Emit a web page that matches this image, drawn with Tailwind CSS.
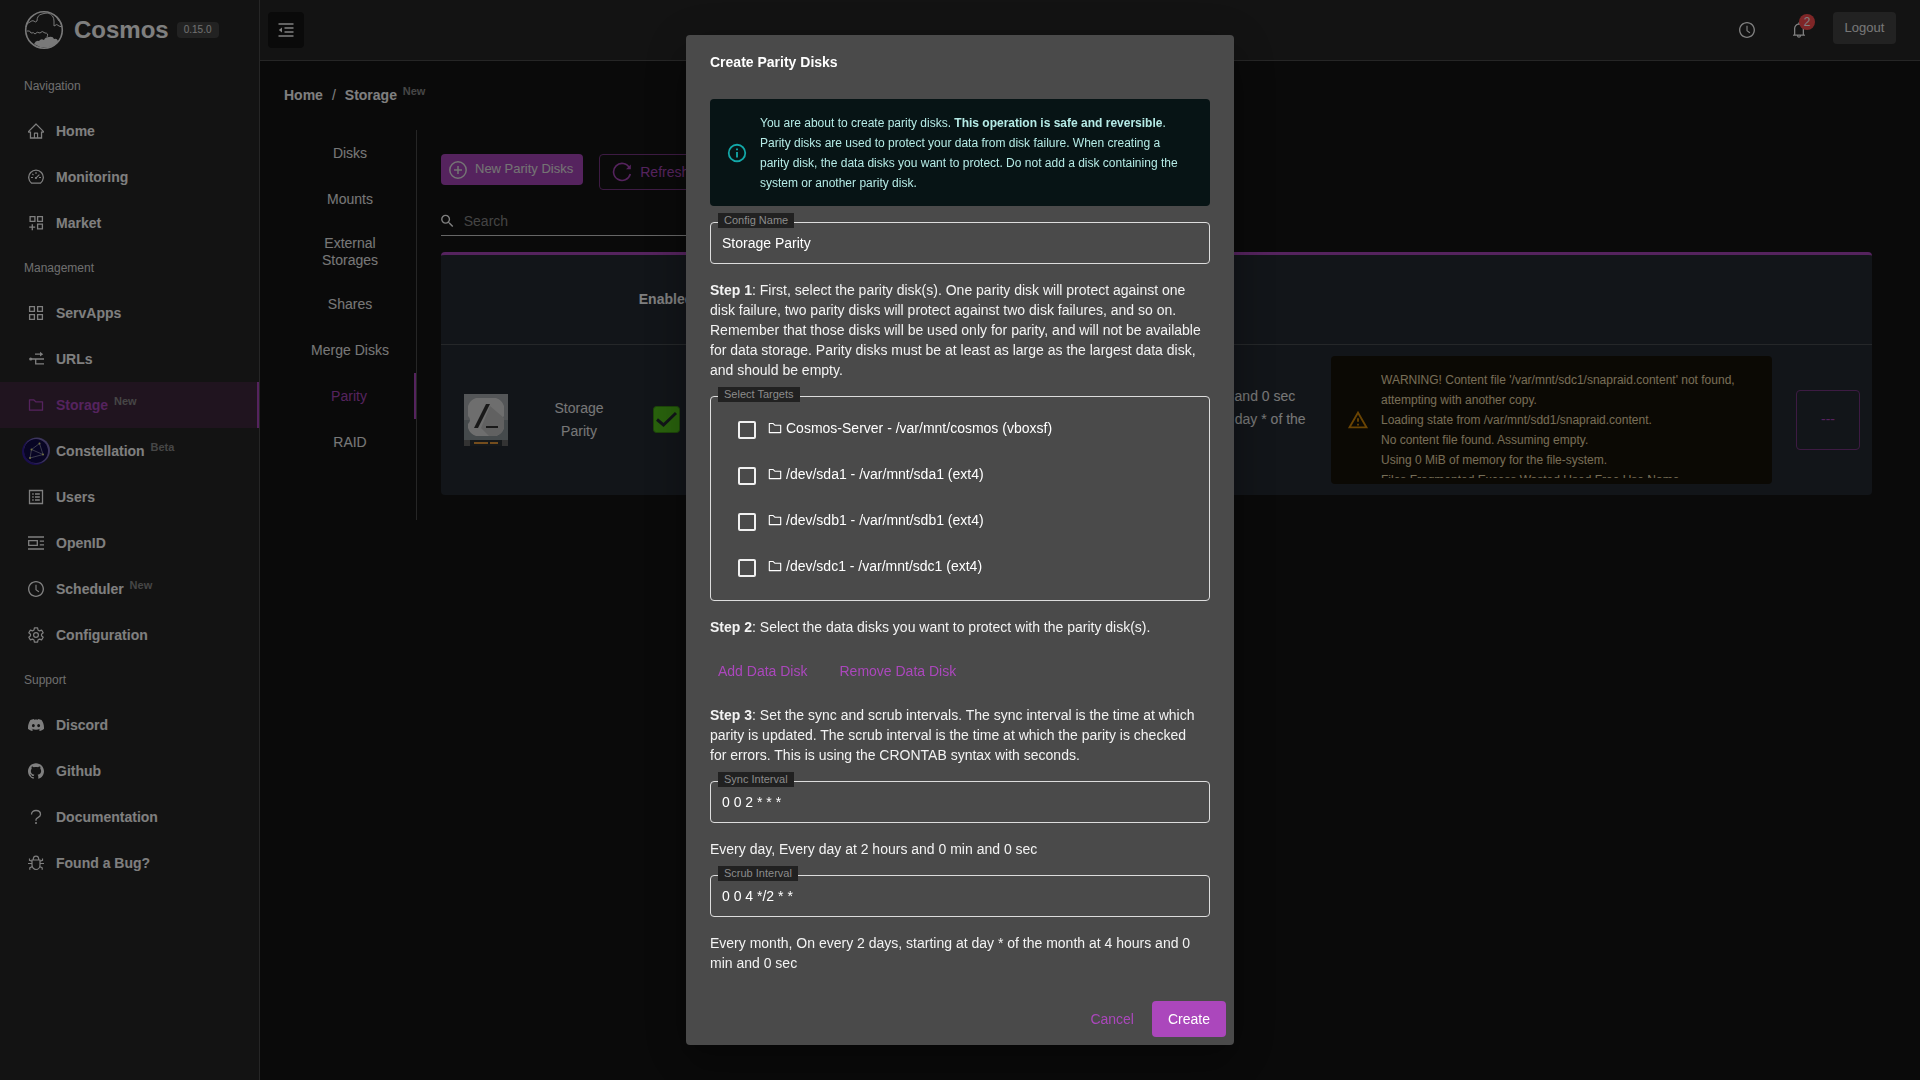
<!DOCTYPE html>
<html lang="en">
<head>
<meta charset="utf-8">
<meta name="viewport" content="width=device-width, initial-scale=1">
<title>Cosmos - Storage</title>
<script src="https://cdn.jsdelivr.net/npm/@tailwindcss/browser@4"></script>
</head>
<body class="bg-[#141414] font-['Liberation_Sans',Arial,sans-serif] text-sm text-white">

<svg class="hidden" aria-hidden="true">
  <symbol id="i-home" viewBox="64 64 896 896"><path d="M946.5 505L560.1 118.8l-25.9-25.9a31.5 31.5 0 00-44.4 0L77.5 505a63.9 63.9 0 00-18.8 46c.4 35.2 29.7 63.3 64.9 63.3h42.5V940h691.8V614.3h43.4c17.1 0 33.2-6.7 45.3-18.8a63.6 63.6 0 0018.7-45.3c0-17-6.7-33.1-18.8-45.2zM568 868H456V664h112v204zm217.9-325.7V868H632V640c0-22.1-17.9-40-40-40H432c-22.1 0-40 17.9-40 40v228H238.1V542.3h-96l370-369.7 23.1 23.1L882 542.3h-96.1z"/></symbol>
  <symbol id="i-clock" viewBox="64 64 896 896"><path d="M512 64C264.6 64 64 264.6 64 512s200.6 448 448 448 448-200.6 448-448S759.4 64 512 64zm0 820c-205.4 0-372-166.6-372-372s166.6-372 372-372 372 166.6 372 372-166.6 372-372 372z"/><path d="M686.7 638.6L544.1 535.5V288c0-4.4-3.6-8-8-8H488c-4.4 0-8 3.6-8 8v275.4c0 2.6 1.2 5 3.3 6.5l165.4 120.6c3.6 2.6 8.6 1.8 11.2-1.7l28.6-39c2.6-3.7 1.8-8.7-1.8-11.2z"/></symbol>
  <symbol id="i-folder" viewBox="64 64 896 896"><path d="M880 298.4H521L403.7 186.2a8.15 8.15 0 00-5.5-2.2H144c-17.7 0-32 14.3-32 32v592c0 17.7 14.3 32 32 32h736c17.7 0 32-14.3 32-32V330.4c0-17.7-14.3-32-32-32zM840 768H184V256h188.5l119.6 114.4H840V768z"/></symbol>
  <symbol id="i-bell" viewBox="64 64 896 896"><path d="M816 768h-24V428c0-141.1-104.3-257.7-240-277.1V112c0-22.1-17.9-40-40-40s-40 17.9-40 40v38.9c-135.7 19.4-240 136-240 277.1v340h-24c-17.7 0-32 14.3-32 32v32c0 4.4 3.6 8 8 8h216c0 61.8 50.2 112 112 112s112-50.2 112-112h216c4.4 0 8-3.6 8-8v-32c0-17.7-14.3-32-32-32zM512 888c-26.5 0-48-21.5-48-48h96c0 26.5-21.5 48-48 48zM304 768V428c0-55.6 21.6-107.8 60.9-147.1S456.4 220 512 220c55.6 0 107.8 21.6 147.1 60.9S720 372.4 720 428v340H304z"/></symbol>
  <symbol id="i-github" viewBox="64 64 896 896"><path d="M511.6 76.3C264.3 76.2 64 276.4 64 523.5 64 718.9 189.3 885 363.8 946c23.5 5.9 19.9-10.8 19.9-22.2v-77.5c-135.7 15.9-141.2-73.9-150.3-88.9C215 726 171.5 718 184.5 703c30.9-15.9 62.4 4 98.9 57.9 26.4 39.1 77.9 32.5 104 26 5.7-23.5 17.9-44.5 34.7-60.8-140.6-25.2-199.2-111-199.2-213 0-49.5 16.3-95 48.3-131.7-20.4-60.5 1.9-112.3 4.9-120 58.1-5.2 118.5 41.6 123.2 45.3 33-8.9 70.7-13.6 112.9-13.6 42.4 0 80.2 4.9 113.5 13.9 11.3-8.6 67.3-48.8 121.3-43.9 2.9 7.7 24.7 58.3 5.5 118 32.4 36.8 48.9 82.7 48.9 132.3 0 102.2-59 188.1-200 212.9a127.5 127.5 0 0138.1 91v112.5c.8 9 0 17.9 15 17.9 177.1-59.7 304.6-227 304.6-424.1 0-247.2-200.4-447.3-447.5-447.3z"/></symbol>
  <symbol id="i-discord" viewBox="0 0 24 24"><path d="M20.317 4.3698a19.7913 19.7913 0 00-4.8851-1.5152.0741.0741 0 00-.0785.0371c-.211.3753-.4447.8648-.6083 1.2495-1.8447-.2762-3.68-.2762-5.4868 0-.1636-.3933-.4058-.8742-.6177-1.2495a.077.077 0 00-.0785-.037 19.7363 19.7363 0 00-4.8852 1.515.0699.0699 0 00-.0321.0277C.5334 9.0458-.319 13.5799.0992 18.0578a.0824.0824 0 00.0312.0561c2.0528 1.5076 4.0413 2.4228 5.9929 3.0294a.0777.0777 0 00.0842-.0276c.4616-.6304.8731-1.2952 1.226-1.9942a.076.076 0 00-.0416-.1057c-.6528-.2476-1.2743-.5495-1.8722-.8923a.077.077 0 01-.0076-.1277c.1258-.0943.2517-.1923.3718-.2914a.0743.0743 0 01.0776-.0105c3.9278 1.7933 8.18 1.7933 12.0614 0a.0739.0739 0 01.0785.0095c.1202.099.246.1981.3728.2924a.077.077 0 01-.0066.1276 12.2986 12.2986 0 01-1.873.8914.0766.0766 0 00-.0407.1067c.3604.698.7719 1.3628 1.225 1.9932a.076.076 0 00.0842.0286c1.961-.6067 3.9495-1.5219 6.0023-3.0294a.077.077 0 00.0313-.0552c.5004-5.177-.8382-9.6739-3.5485-13.6604a.061.061 0 00-.0312-.0286zM8.02 15.3312c-1.1825 0-2.1569-1.0857-2.1569-2.419 0-1.3332.9555-2.4189 2.157-2.4189 1.2108 0 2.1757 1.0952 2.1568 2.419 0 1.3332-.9555 2.4189-2.1569 2.4189zm7.9748 0c-1.1825 0-2.1569-1.0857-2.1569-2.419 0-1.3332.9554-2.4189 2.1569-2.4189 1.2108 0 2.1757 1.0952 2.1568 2.419 0 1.3332-.946 2.4189-2.1568 2.4189Z"/></symbol>
  <symbol id="i-dash" viewBox="0 0 16 16"><path fill="none" stroke="currentColor" stroke-width="1.3" stroke-linejoin="round" d="M3.6 14.2A7.3 7.3 0 1 1 12.400 14.200Z"/><path fill="none" stroke="currentColor" stroke-width="1.1" d="M8 3v2M3 8.500h2M11 8.500h2M4.300 4.900l1.200 1.200M7.800 9.200l3.600-3.600"/><circle cx="7.900" cy="9" r="1.100"/></symbol>
  <symbol id="i-appadd" viewBox="0 0 16 16"><path fill="none" stroke="currentColor" stroke-width="1.300" d="M2.100 1.600h4.800v4.800H2.100ZM9.600 1.600h4.800v4.800H9.600ZM9.600 9.100h4.800v4.800H9.600ZM4.300 9.200v6M1.200 12.200h6"/></symbol>
  <symbol id="i-app" viewBox="0 0 16 16"><path fill="none" stroke="currentColor" stroke-width="1.300" d="M1.600 1.600h4.800v4.800H1.600ZM9.600 1.600h4.800v4.800H9.600ZM9.600 9.600h4.800v4.800H9.600ZM1.600 9.600h4.800v4.800H1.600Z"/></symbol>
  <symbol id="i-node" viewBox="0 0 16 16"><circle cx="2.700" cy="8" r="1.600"/><path fill="none" stroke="currentColor" stroke-width="1.300" d="M2.700 8H16M7 3.200h6M7.700 8v4.900H16"/><path d="M12 .8L15.200 3.200L12 5.600Z"/></symbol>
  <symbol id="i-profile" viewBox="0 0 16 16"><path fill="none" stroke="currentColor" stroke-width="1.300" d="M1.500 1.500h13v13h-13ZM7 5h4.800M7 8h4.800M7 11h4.800"/><path d="M4.200 4.200h1.500v1.500H4.200ZM4.200 7.200h1.500v1.500H4.200ZM4.200 10.200h1.500v1.500H4.200Z"/></symbol>
  <symbol id="i-openid" viewBox="0 0 16 16"><path fill="none" stroke="currentColor" stroke-width="1.300" d="M0 2h16M0 14h16M.7 5.700h8.600v4.600H.7ZM11.800 6.200H16M11.800 9.800H16"/></symbol>
  <symbol id="i-gear" viewBox="0 0 16 16"><path fill="none" stroke="currentColor" stroke-width="1.200" stroke-linejoin="round" d="M6.400.8h3.200l.4 2.200 1.500.9 2.100-.8 1.600 2.700-1.700 1.400v1.600l1.700 1.400-1.600 2.700-2.100-.8-1.500.9-.4 2.200H6.400L6 13l-1.500-.9-2.100.8L.8 10.200l1.700-1.400V7.200L.8 5.800l1.600-2.700 2.100.8L6 3Z"/><circle cx="8" cy="8" r="2.400" fill="none" stroke="currentColor" stroke-width="1.200"/></symbol>
  <symbol id="i-question" viewBox="0 0 16 16"><path fill="none" stroke="currentColor" stroke-width="1.300" d="M3.500 5.500C3.500 2.700 5.500 1.500 8 1.500s4.500 1.400 4.500 4C12.500 8.500 8 8.500 8 10.500v1.200"/><circle cx="8" cy="14" r="1"/></symbol>
  <symbol id="i-bug" viewBox="0 0 16 16"><path fill="none" stroke="currentColor" stroke-width="1.200" d="M4 5h8v5a4 4.500 0 0 1-8 0ZM5.200 5a2.800 3.800 0 0 1 5.600 0M0 8.500h4M12 8.500h4M1.500 3.500v1.800L4 6.300M14.500 3.500v1.800L12 6.300M1.800 14.800v-2l2.400-1.200M14.200 14.800v-2l-2.400-1.200"/></symbol>
  <symbol id="i-const" viewBox="0 0 28 28"><circle cx="13.500" cy="14.500" r="13.500" fill="#341c9c"/><circle cx="15" cy="13.500" r="13" fill="#7a6cb8"/><circle cx="14" cy="14" r="12" fill="#100a48"/><path d="M9.500 12.500 17.500 6.500 21 17.500 8 21ZM9.500 12.500 21 17.500" fill="none" stroke="#77779a"/><g fill="#e4e480"><circle cx="9.500" cy="12.500" r="1"/><circle cx="17.500" cy="6.500" r="1"/><circle cx="21" cy="17.500" r="1"/><circle cx="8" cy="21" r="1"/></g></symbol>
</svg>

<div class="flex min-h-screen">
  <aside class="w-[260px] shrink-0 border-r border-[#4d4d4d] bg-[#262626]">
    <a href="#" class="flex h-16 items-center pb-1 pl-6">
      <svg class="size-10" viewBox="0 0 40 40" fill="none" stroke="#f2f2f2" aria-hidden="true"><circle cx="20" cy="20" r="18.300" stroke-width="1.600"/><path d="M10 34q2-4 5-3 2-3 5-1 1-3 5-3 4-1 5 2 3-1 4 2-1 3-6 5-9 4-18-2Z" fill="#f2f2f2" stroke="none"/><path d="M2 17q0-4 4-5 2-2 4-1 1 2 3 0 0-6 5-7 3-1 6-1 6 2 6 8v5q3-3 5 0l3 1M29 4q4 3 6 7M3 21q3-1 4 2 3-1 4 1 2-3 5-1 2-3 5 0 4 0 2 4"/></svg>
      <span class="ml-2.5 text-2xl font-bold">Cosmos</span>
      <span class="ml-2 flex h-4 items-center rounded bg-[#444] px-[7px] text-[10px] leading-4 text-[#e0e0e0]">0.15.0</span>
    </a>
    <nav>
      <h2 class="flex h-11 items-center pl-6 text-xs text-[#ddd]">Navigation</h2>
      <ul class="font-bold">
        <li><a href="#" class="flex h-[46px] items-center gap-3 pl-7"><svg class="size-4 fill-current"><use href="#i-home"/></svg>Home</a></li>
        <li><a href="#" class="flex h-[46px] items-center gap-3 pl-7"><svg class="size-4 fill-current"><use href="#i-dash"/></svg>Monitoring</a></li>
        <li><a href="#" class="flex h-[46px] items-center gap-3 pl-7"><svg class="size-4 fill-current"><use href="#i-appadd"/></svg>Market</a></li>
      </ul>
      <h2 class="flex h-11 items-center pl-6 text-xs text-[#ddd]">Management</h2>
      <ul class="font-bold">
        <li><a href="#" class="flex h-[46px] items-center gap-3 pl-7"><svg class="size-4 fill-current"><use href="#i-app"/></svg>ServApps</a></li>
        <li><a href="#" class="flex h-[46px] items-center gap-3 pl-7"><svg class="size-4 fill-current"><use href="#i-node"/></svg>URLs</a></li>
        <li><a href="#" class="flex h-[46px] items-center gap-3 border-r-2 border-[#ab47bc] bg-[#41293f] pl-7 text-[#ab47bc]"><svg class="size-4 fill-current"><use href="#i-folder"/></svg><span>Storage <sup class="ml-0.5 text-[11px] text-[#8c8c8c]">New</sup></span></a></li>
        <li><a href="#" class="flex h-[46px] items-center gap-3 pl-7"><span class="flex w-4 justify-center"><svg class="size-7 shrink-0"><use href="#i-const"/></svg></span><span>Constellation <sup class="ml-0.5 text-[11px] text-[#8c8c8c]">Beta</sup></span></a></li>
        <li><a href="#" class="flex h-[46px] items-center gap-3 pl-7"><svg class="size-4 fill-current"><use href="#i-profile"/></svg>Users</a></li>
        <li><a href="#" class="flex h-[46px] items-center gap-3 pl-7"><svg class="size-4 fill-current"><use href="#i-openid"/></svg>OpenID</a></li>
        <li><a href="#" class="flex h-[46px] items-center gap-3 pl-7"><svg class="size-4 fill-current"><use href="#i-clock"/></svg><span>Scheduler <sup class="ml-0.5 text-[11px] text-[#8c8c8c]">New</sup></span></a></li>
        <li><a href="#" class="flex h-[46px] items-center gap-3 pl-7"><svg class="size-4 fill-current"><use href="#i-gear"/></svg>Configuration</a></li>
      </ul>
      <h2 class="flex h-11 items-center pl-6 text-xs text-[#ddd]">Support</h2>
      <ul class="font-bold">
        <li><a href="#" class="flex h-[46px] items-center gap-3 pl-7"><svg class="size-4 fill-current"><use href="#i-discord"/></svg>Discord</a></li>
        <li><a href="#" class="flex h-[46px] items-center gap-3 pl-7"><svg class="size-4 fill-current"><use href="#i-github"/></svg>Github</a></li>
        <li><a href="#" class="flex h-[46px] items-center gap-3 pl-7"><svg class="size-4 fill-current"><use href="#i-question"/></svg>Documentation</a></li>
        <li><a href="#" class="flex h-[46px] items-center gap-3 pl-7"><svg class="size-4 fill-current"><use href="#i-bug"/></svg>Found a Bug?</a></li>
      </ul>
    </nav>
  </aside>

  <div class="min-w-0 flex-1">
    <header class="flex h-[61px] items-center border-b border-[#4d4d4d] bg-[#262626] pr-6 pl-2">
      <button type="button" aria-label="Toggle menu" class="flex size-9 items-center justify-center rounded bg-[#141414]">
        <svg class="size-4 fill-none stroke-current" viewBox="0 0 16 16" stroke-width="1.300"><path d="M.5 2h15M6.500 6h9M6.500 10h9M.5 14h15"/><path d="M4 5.500v5L.8 8Z" fill="currentColor" stroke="none"/></svg>
      </button>
      <button type="button" aria-label="Jobs" class="ml-auto flex size-9 items-center justify-center"><svg class="size-4 fill-current"><use href="#i-clock"/></svg></button>
      <button type="button" aria-label="Notifications" class="relative ml-4 flex size-9 items-center justify-center"><svg class="size-4 fill-current"><use href="#i-bell"/></svg><span class="absolute top-0.5 right-0.5 flex size-4 items-center justify-center rounded-full bg-[#ff4d4f] text-xs">2</span></button>
      <button type="button" class="mb-1 ml-4 h-8 w-[63px] rounded bg-[#444] text-[13px] text-[#eee]">Logout</button>
    </header>

    <main class="pt-6 pr-12 pl-6">
      <nav class="flex h-5 items-center gap-[9px] font-bold"><a href="#">Home</a><span class="font-normal">/</span><span>Storage <sup class="ml-0.5 text-[11px] text-[#8c8c8c]">New</sup></span></nav>
      <div class="mt-[25px] flex">
        <ul class="h-[390px] w-[133px] shrink-0 border-r border-[#4d4d4d] text-center leading-[17px] text-[#f0f0f0]">
          <li><a href="#" class="flex h-[46px] items-center justify-center">Disks</a></li>
          <li><a href="#" class="flex h-[46px] items-center justify-center">Mounts</a></li>
          <li><a href="#" class="flex h-[59px] items-center justify-center px-6">External Storages</a></li>
          <li><a href="#" class="flex h-[46px] items-center justify-center">Shares</a></li>
          <li><a href="#" class="flex h-[46px] items-center justify-center">Merge Disks</a></li>
          <li><a href="#" class="flex h-[46px] items-center justify-center border-r-2 border-[#ab47bc] text-[#ab47bc]">Parity</a></li>
          <li><a href="#" class="flex h-[46px] items-center justify-center">RAID</a></li>
        </ul>
        <section class="min-w-0 flex-1 pt-6 pl-6">
          <div class="flex items-start gap-4">
            <button type="button" class="flex h-[31px] items-center gap-2 rounded bg-[#ab47bc] pr-2.5 pl-2 text-[13px] text-[#e8e8e8]"><svg class="size-[18px] fill-none stroke-current" viewBox="0 0 18 18" stroke-width="1.500"><circle cx="9" cy="9" r="8.200"/><path d="M9 5v8M5 9h8"/></svg>New Parity Disks</button>
            <button type="button" class="flex h-9 items-center gap-2 rounded border border-[#7b3787] px-3 text-[#ab47bc]"><svg class="size-5 fill-none stroke-current" viewBox="0 0 20 20" stroke-width="1.600"><path d="M17.500 5.800A8.500 8.500 0 1 0 18.300 12"/><path d="M18.800 2.500v4.800H14Z" fill="currentColor" stroke="none"/></svg>Refresh</button>
          </div>
          <label class="mt-4 flex h-[30px] w-80 items-center gap-2 border-b border-[#ccc]"><svg class="size-[18px] -ml-0.5 fill-current" viewBox="0 0 24 24"><path d="M15.500 14h-.79l-.28-.27C15.410 12.590 16 11.110 16 9.500 16 5.910 13.090 3 9.500 3S3 5.910 3 9.500 5.910 16 9.500 16c1.610 0 3.090-.59 4.230-1.570l.27.28v.79l5 4.990L20.490 19l-4.990-5zm-6 0C7.010 14 5 11.990 5 9.500S7.010 5 9.500 5 14 7.010 14 9.500 11.990 14 9.500 14z"/></svg><input type="search" aria-label="Search" placeholder="Search" class="w-full bg-transparent outline-none placeholder:text-[#888]"></label>
          <div class="mt-4 overflow-hidden rounded border-t-3 border-[#ab47bc] bg-[#242a32]">
            <table class="w-full table-fixed border-collapse">
              <colgroup><col class="w-[90px]"><col class="w-24"><col class="w-[78px]"><col><col class="w-[420px]"><col class="w-[465px]"><col class="w-[88px]"></colgroup>
              <thead><tr class="h-[89px] border-b border-[#4a4f53]"><th></th><th></th><th class="font-bold">Enabled</th><th></th><th></th><th></th><th></th></tr></thead>
              <tbody><tr class="h-[151px] leading-[23px] text-[#eee]">
                <td><svg class="mx-auto h-[52px] w-11" viewBox="0 0 44 52" aria-label="Disk"><path fill="#a8adb0" d="M0 0h44v52H0z"/><path fill="#8b9599" d="M0 26h44v20H0z"/><path fill="#dcdcdc" d="M12 4h20q6 2 8 8v10q-4 4 0 8v4q-2 6-8 8H12q-6-2-8-8v-4q4-4 0-8V12q2-6 8-8z"/><path fill="#c2c2c2" d="M26 12 40 24v10q-2 6-8 8h-7l-8-8Z"/><path fill="#333" d="M10 34 22 10h4L14 34ZM22 32h12v2H22z"/><path fill="#2c3336" d="M0 46h44v6H0z"/><path fill="#666" d="M0 46h6v6H0zM38 46h6v6h-6z"/><path fill="#e89a3a" d="M10 48h14v2H10zM26 48h8v2h-8z"/></svg></td>
                <td class="px-4 text-center">Storage Parity</td>
                <td><svg class="mx-auto size-[27px]" viewBox="0 0 27 27" role="img" aria-label="Enabled"><rect x=".5" y=".5" width="26" height="26" rx="3" fill="#52c41a" stroke="#3a8f12"/><path d="M4 13.500 10.500 19 23 7" fill="none" stroke="#242a32" stroke-width="3"/></svg></td>
                <td></td>
                <td class="pr-1 pl-[30px]"><p>Sync: Every day, Every day at 2 hours and 0 min and 0 sec</p><p>Scrub: Every month, On every 2 days, starting at day * of the month at 4 hours and 0 min and 0 sec</p></td>
                <td class="px-3"><div class="flex h-32 items-center gap-3 rounded bg-[#161208] px-4"><svg class="size-[22px] shrink-0 fill-[#d48806]" viewBox="0 0 24 24"><path d="M12 5.990L19.530 19H4.470L12 5.990M12 2L1 21h22L12 2zm1 14h-2v2h2v-2zm0-6h-2v4h2v-4z"/></svg><div class="mb-1.5 h-[108px] self-end overflow-hidden text-xs leading-5 text-[#ecdcae]"><p>WARNING! Content file '/var/mnt/sdc1/snapraid.content' not found, attempting with another copy.</p><p>Loading state from /var/mnt/sdd1/snapraid.content.</p><p>No content file found. Assuming empty.</p><p>Using 0 MiB of memory for the file-system.</p><p>Files Fragmented Excess Wasted Used Free Use Name</p></div></div></td>
                <td class="px-3"><button type="button" class="h-[60px] w-full rounded border border-[#7b3787] text-[#ab47bc]">---</button></td>
              </tr></tbody>
            </table>
          </div>
        </section>
      </div>
    </main>
  </div>
</div>

<div class="fixed inset-0 flex items-center justify-center bg-black/50">
  <form role="dialog" aria-label="Create Parity Disks" class="w-[548px] rounded bg-[#4a4a4a] pb-2 leading-5 text-[#f3f3f3] shadow-[0_11px_15px_-7px_rgba(0,0,0,0.2),0_24px_38px_3px_rgba(0,0,0,0.14),0_9px_46px_8px_rgba(0,0,0,0.12)]">
    <h1 class="h-16 px-6 pt-[17px] font-bold text-white">Create Parity Disks</h1>
    <div class="flex flex-col gap-4 px-6">
      <div class="flex h-[107px] items-center gap-3 rounded bg-[#071415] pr-6 pl-4 text-xs leading-5 text-[#b5ebe6]"><svg class="size-[22px] shrink-0 fill-[#13a8a8]" viewBox="0 0 24 24"><path d="M11,9H13V7H11M12,20C7.590,20 4,16.410 4,12C4,7.590 7.590,4 12,4C16.410,4 20,7.590 20,12C20,16.410 16.410,20 12,20M12,2A10,10 0 0,0 2,12A10,10 0 0,0 12,22A10,10 0 0,0 22,12A10,10 0 0,0 12,2M11,17H13V11H11V17Z"/></svg><p>You are about to create parity disks. <strong>This operation is safe and reversible</strong>. Parity disks are used to protect your data from disk failure. When creating a parity disk, the data disks you want to protect. Do not add a disk containing the system or another parity disk.</p></div>
      <div class="relative"><label for="name" class="absolute -top-[9px] left-2 bg-[#212121] px-1.5 text-[11px] leading-[15px] text-[#8c8c8c]">Config Name</label><input id="name" value="Storage Parity" class="block h-[42px] w-full rounded border border-[#ddd] bg-transparent px-[11px] text-white"></div>
      <p><strong>Step 1</strong>: First, select the parity disk(s). One parity disk will protect against one disk failure, two parity disks will protect against two disk failures, and so on. Remember that those disks will be used only for parity, and will not be available for data storage. Parity disks must be at least as large as the largest data disk, and should be empty.</p>
      <div role="group" aria-labelledby="targets" class="relative h-[205px] rounded border border-[#ddd] pt-2 pl-[27px] text-white">
        <span id="targets" class="absolute -top-[10px] left-[7px] bg-[#212121] px-1.5 text-[11px] leading-[15px] text-[#8c8c8c]">Select Targets</span>
        <label class="flex h-[46px] items-center"><input type="checkbox" class="mt-1 size-[18px] appearance-none rounded-xs border-2 border-[#f0f0f0]"><svg class="mr-1 ml-3 size-3.5 fill-current"><use href="#i-folder"/></svg>Cosmos-Server - /var/mnt/cosmos (vboxsf)</label>
        <label class="flex h-[46px] items-center"><input type="checkbox" class="mt-1 size-[18px] appearance-none rounded-xs border-2 border-[#f0f0f0]"><svg class="mr-1 ml-3 size-3.5 fill-current"><use href="#i-folder"/></svg>/dev/sda1 - /var/mnt/sda1 (ext4)</label>
        <label class="flex h-[46px] items-center"><input type="checkbox" class="mt-1 size-[18px] appearance-none rounded-xs border-2 border-[#f0f0f0]"><svg class="mr-1 ml-3 size-3.5 fill-current"><use href="#i-folder"/></svg>/dev/sdb1 - /var/mnt/sdb1 (ext4)</label>
        <label class="flex h-[46px] items-center"><input type="checkbox" class="mt-1 size-[18px] appearance-none rounded-xs border-2 border-[#f0f0f0]"><svg class="mr-1 ml-3 size-3.5 fill-current"><use href="#i-folder"/></svg>/dev/sdc1 - /var/mnt/sdc1 (ext4)</label>
      </div>
      <p><strong>Step 2</strong>: Select the data disks you want to protect with the parity disk(s).</p>
      <div class="flex h-9 gap-4 text-[#ab47bc]"><button type="button" class="px-2">Add Data Disk</button><button type="button" class="px-2">Remove Data Disk</button></div>
      <p class="pr-2"><strong>Step 3</strong>: Set the sync and scrub intervals. The sync interval is the time at which parity is updated. The scrub interval is the time at which the parity is checked for errors. This is using the CRONTAB syntax with seconds.</p>
      <div class="relative"><label for="sync" class="absolute -top-[9px] left-2 bg-[#212121] px-1.5 text-[11px] leading-[15px] text-[#8c8c8c]">Sync Interval</label><input id="sync" value="0 0 2 * * *" class="block h-[42px] w-full rounded border border-[#ddd] bg-transparent px-[11px] text-white"></div>
      <p>Every day, Every day at 2 hours and 0 min and 0 sec</p>
      <div class="relative"><label for="scrub" class="absolute -top-[9px] left-2 bg-[#212121] px-1.5 text-[11px] leading-[15px] text-[#8c8c8c]">Scrub Interval</label><input id="scrub" value="0 0 4 */2 * *" class="block h-[42px] w-full rounded border border-[#ddd] bg-transparent px-[11px] text-white"></div>
      <p>Every month, On every 2 days, starting at day * of the month at 4 hours and 0 min and 0 sec</p>
    </div>
    <div class="mt-7 flex justify-end gap-2 px-2 text-[#ab47bc]"><button type="button" class="h-9 px-2.5">Cancel</button><button type="submit" class="h-9 rounded bg-[#ab47bc] px-4 text-white">Create</button></div>
  </form>
</div>
</body>
</html>
